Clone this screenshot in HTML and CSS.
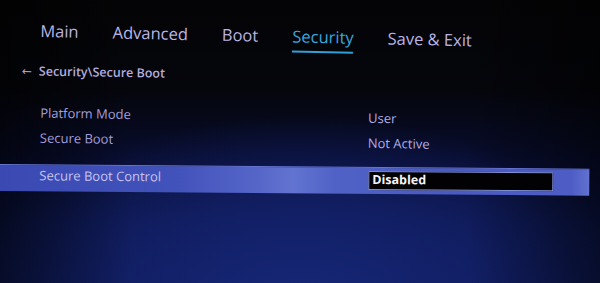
FILE: index.html
```html
<!DOCTYPE html>
<html lang="en">
<head>
<meta charset="utf-8">
<title>Security - Secure Boot</title>
<link rel="stylesheet" href="styles.css">
</head>
<body>
<div class="screen">
  <nav class="tabs">
    <span class="tab">Main</span>
    <span class="tab">Advanced</span>
    <span class="tab">Boot</span>
    <span class="tab active">Security</span>
    <span class="tab">Save &amp; Exit</span>
  </nav>
  <div class="crumb"><span class="arrow">&larr;</span><span class="path">Security\Secure Boot</span></div>
  <div class="rows">
    <div class="row"><span class="label">Platform Mode</span><span class="value">User</span></div>
    <div class="row"><span class="label">Secure Boot</span><span class="value">Not Active</span></div>
    <div class="row selected"><span class="label">Secure Boot Control</span><span class="value"><span class="box">Disabled</span></span></div>
  </div>
</div>
</body>
</html>
```

FILE: styles.css
```css
html, body {
  margin: 0;
  padding: 0;
}
body {
  width: 600px;
  height: 283px;
  overflow: hidden;
  font-family: "Open Sans", "Noto Sans", sans-serif;
  background:
    linear-gradient(90deg, rgba(0,0,0,0.55) 0%, rgba(0,0,0,0) 22%, rgba(0,0,0,0) 78%, rgba(0,0,0,0.5) 100%),
    radial-gradient(ellipse 340px 190px at 50% 108%, #182878 0%, #13216a 40%, rgba(14,24,80,0) 100%),
    linear-gradient(180deg, #040406 0%, #05060c 32%, #080d30 58%, #0c164c 80%, #0e1a58 100%);
}
.screen {
  transform: rotate(0.9deg);
  transform-origin: 0 0;
}
.tabs {
  display: flex;
  gap: 34px;
  padding: 18px 0 0 41px;
  height: 31px;
  font-size: 16.5px;
  color: #bab4e4;
  transform: rotate(0.35deg);
  transform-origin: 0 0;
}
.tab {
  line-height: 24px;
  height: 24px;
}
.tab.active {
  color: #3aa6dc;
  border-bottom: 2px solid #2fa0d8;
  height: 26px;
}
.crumb {
  display: flex;
  align-items: center;
  padding: 12px 0 0 23px;
  height: 20px;
  font-size: 12.5px;
  font-weight: 600;
  color: #b2acdf;
  line-height: 20px;
}
.arrow {
  font-family: "DejaVu Sans", sans-serif;
  font-weight: 400;
  font-size: 12px;
  width: 17px;
  color: #a8a2d8;
}
.rows {
  padding-top: 19px;
}
.row {
  display: grid;
  grid-template-columns: 328px 1fr;
  padding-left: 42px;
  height: 25px;
  line-height: 25px;
  font-size: 13px;
  color: #a29ddc;
}
.value {
  color: #b0abe2;
}
.row.selected {
  margin-top: 14px;
  width: 550px;
  height: 26px;
  line-height: 20px;
  align-items: start;
  transform: rotate(-0.45deg);
  transform-origin: 0 0;
  background: linear-gradient(90deg, #3a4ab2 0%, #4252bb 30%, #5566c8 44%, #6274d0 50%, #5062c6 57%, #4a5ac2 75%, #4d5dc5 97%, #6272d0 100%);
  border-top: 1px solid #6676d4;
  color: #c8c4ee;
}
.box {
  display: block;
  margin: 3px 0 0 1px;
  width: 180px;
  height: 17px;
  background: #020204;
  border: 1px solid #8090d4;
  color: #f4f4f8;
  font-size: 12.5px;
  font-weight: 700;
  line-height: 15px;
  padding-left: 3px;
}
```
